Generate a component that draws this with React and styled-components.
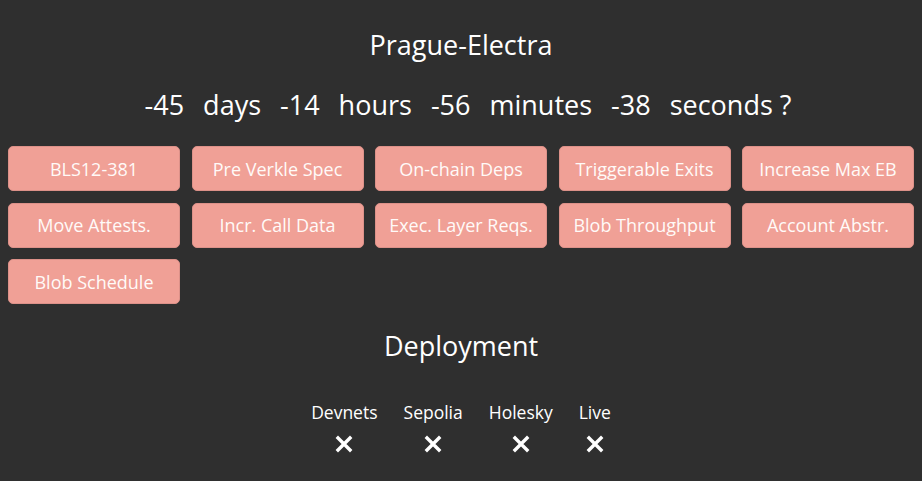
import React from "react";
import styled, { createGlobalStyle } from "styled-components";

const GlobalStyle = createGlobalStyle`
  html, body {
    margin: 0;
    padding: 0;
    background-color: #2f2f2f;
  }
  body {
    padding: 8px;
    font-family: "Open Sans", "Noto Sans", sans-serif;
    color: #ffffff;
  }
`;

const features = [
  "BLS12-381",
  "Pre Verkle Spec",
  "On-chain Deps",
  "Triggerable Exits",
  "Increase Max EB",
  "Move Attests.",
  "Incr. Call Data",
  "Exec. Layer Reqs.",
  "Blob Throughput",
  "Account Abstr.",
  "Blob Schedule",
];

const countdown = [
  ["-45", "days"],
  ["-14", "hours"],
  ["-56", "minutes"],
  ["-38", "seconds ?"],
];

const networks = ["Devnets", "Sepolia", "Holesky", "Live"];

const CrossIcon = () => (
  <svg width="18" height="18" viewBox="0 0 18 18">
    <path
      d="M3 3 L15 15 M15 3 L3 15"
      stroke="#ffffff"
      strokeWidth="3.4"
      strokeLinecap="square"
      fill="none"
    />
  </svg>
);

const App = () => {
  return (
    <Container>
      <GlobalStyle />
      <Title>Prague-Electra</Title>
      <Countdown>
        {countdown.map(([value, unit]) => (
          <React.Fragment key={unit}>
            <span>{value}</span>
            <span>{unit}</span>
          </React.Fragment>
        ))}
      </Countdown>
      <FeatureGrid>
        {features.map((f) => (
          <FeatureButton key={f}>{f}</FeatureButton>
        ))}
      </FeatureGrid>
      <SubTitle>Deployment</SubTitle>
      <Networks>
        {networks.map((n) => (
          <Network key={n}>
            <NetworkName>{n}</NetworkName>
            <CrossIcon />
          </Network>
        ))}
      </Networks>
    </Container>
  );
};

const Container = styled.div`
  display: flex;
  flex-direction: column;
  align-items: center;
`;

const Title = styled.div`
  margin-top: 21px;
  font-size: 27px;
  line-height: 32px;
`;

const Countdown = styled.div`
  margin-top: 28px;
  padding-left: 14px;
  display: flex;
  gap: 19px;
  font-size: 27px;
  line-height: 32px;
  white-space: pre;
`;

const FeatureGrid = styled.div`
  margin-top: 25px;
  width: 100%;
  display: grid;
  grid-template-columns: repeat(5, 1fr);
  gap: 11.5px;
`;

const FeatureButton = styled.div`
  height: 45px;
  box-sizing: border-box;
  display: flex;
  align-items: center;
  justify-content: center;
  background-color: #f0a096;
  border: 1px solid #dc9189;
  border-radius: 5px;
  font-size: 18px;
  color: #fffaf8;
`;

const SubTitle = styled.div`
  margin-top: 26px;
  font-size: 27px;
  line-height: 32px;
`;

const Networks = styled.div`
  margin-top: 38px;
  display: flex;
  gap: 26px;
`;

const Network = styled.div`
  display: flex;
  flex-direction: column;
  align-items: center;
  gap: 11px;
`;

const NetworkName = styled.div`
  font-size: 17.5px;
  line-height: 24px;
`;

export default App;
